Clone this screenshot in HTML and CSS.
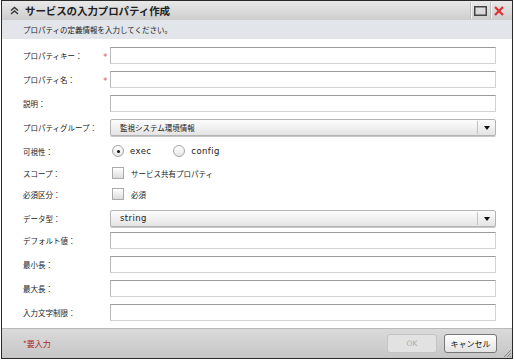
FILE: index.html
```html
<!DOCTYPE html>
<html lang="ja">
<head>
  <meta charset="UTF-8" />
  <meta name="viewport" content="width=device-width, initial-scale=1" />
  <title>サービスの入力プロパティ作成</title>
  <link rel="stylesheet" href="styles.css">
</head>
<body>
  <div class="dialog">
    <div class="titlebar">
      <svg class="collapse" width="9" height="9" viewBox="0 0 9 9">
        <path d="M1 4.5 L4.5 1.5 L8 4.5 M1 8 L4.5 5 L8 8" fill="none" stroke="#333" stroke-width="1.4" />
      </svg>
      <span class="title">サービスの入力プロパティ作成</span>
      <div class="tools">
        <span class="tool-sep"></span>
        <svg width="13" height="10" viewBox="0 0 13 10">
          <rect x="0.75" y="0.75" width="11.5" height="8.5" fill="none" stroke="#444" stroke-width="1.5" />
        </svg>
        <span class="tool-sep"></span>
        <svg width="10" height="10" viewBox="0 0 10 10">
          <path d="M1 1 L9 9 M9 1 L1 9" stroke="#e03030" stroke-width="2.2" />
        </svg>
      </div>
    </div>

    <div class="subtitle">プロパティの定義情報を入力してください。</div>

    <div class="form">
      <label class="label">プロパティキー：</label>
      <span class="req">*</span>
      <input class="text" type="text" />

      <label class="label">プロパティ名：</label>
      <span class="req">*</span>
      <input class="text" type="text" />

      <label class="label">説明：</label>
      <span></span>
      <input class="text" type="text" />

      <label class="label">プロパティグループ：</label>
      <span></span>
      <div class="select">
        <span class="select-value">監視システム環境情報</span>
        <span class="select-arrow"></span>
      </div>

      <label class="label">可視性：</label>
      <span></span>
      <div class="choices">
        <span class="radio checked"></span><span class="latin">exec</span>
        <span class="radio gap"></span><span class="latin">config</span>
      </div>

      <label class="label">スコープ：</label>
      <span></span>
      <div class="choices">
        <span class="check"></span><span>サービス共有プロパティ</span>
      </div>

      <label class="label">必須区分：</label>
      <span></span>
      <div class="choices">
        <span class="check"></span><span>必須</span>
      </div>

      <label class="label shift">データ型：</label>
      <span class="shift"></span>
      <div class="select shift">
        <span class="select-value latin">string</span>
        <span class="select-arrow"></span>
      </div>

      <label class="label">デフォルト値：</label>
      <span></span>
      <input class="text" type="text" />

      <label class="label">最小長：</label>
      <span></span>
      <input class="text" type="text" />

      <label class="label">最大長：</label>
      <span></span>
      <input class="text" type="text" />

      <label class="label">入力文字制限：</label>
      <span></span>
      <input class="text" type="text" />
    </div>

    <div class="footer">
      <span class="req-note">*要入力</span>
      <div class="buttons">
        <button class="btn btn-ok" disabled>OK</button>
        <button class="btn">キャンセル</button>
      </div>
      <svg class="grip" width="7" height="7" viewBox="0 0 7 7">
        <path d="M0 7 L7 0 M3 7 L7 3 M6 7 L7 6" stroke="#888" stroke-width="1" />
      </svg>
    </div>
  </div>
</body>
</html>
```

FILE: styles.css
```css
* {
  box-sizing: border-box;
}

body {
  margin: 0;
  background: #fff;
  font-family: "Noto Sans CJK JP", "DejaVu Sans", sans-serif;
  color: #222;
}

.dialog {
  margin-left: 1px;
  width: 512px;
  height: 359px;
  border: 1px solid #2a2a2a;
  display: flex;
  flex-direction: column;
  background: #fff;
}

/* title */
.titlebar {
  height: 19px;
  display: flex;
  align-items: center;
  padding-left: 8px;
  background: linear-gradient(#e9e9e9, #cdcdcd);
  position: relative;
}

.collapse {
  margin-right: 6px;
}

.title {
  font-size: 10.5px;
  font-weight: 700;
  color: #222;
  letter-spacing: -0.1px;
}

.tools {
  margin-left: auto;
  display: flex;
  align-items: center;
  gap: 3px;
  padding-right: 8px;
}

.tool-sep {
  width: 1px;
  height: 17px;
  background: #bdbdbd;
  box-shadow: 1px 0 0 #f2f2f2;
}

.subtitle {
  height: 19px;
  background: #e2e6ea;
  font-size: 7.5px;
  line-height: 19px;
  padding-left: 21px;
  color: #222;
}

/* form */
.form {
  flex: 1;
  display: grid;
  grid-template-columns: 80px 7px 1fr;
  grid-template-rows: 17px 17px 17px 17px 16px 14px 14px 17px 17px 17px 17px 17px;
  row-gap: 7px;
  padding: 8px 16px 4px 21px;
  align-items: center;
}

.label {
  font-size: 7.5px;
  color: #222;
  white-space: nowrap;
}

.shift {
  margin-top: 3px;
}

.req {
  color: #e05a5a;
  font-family: "DejaVu Sans", sans-serif;
  font-size: 9px;
  line-height: 1;
  padding-top: 3px;
}

.text {
  width: 100%;
  height: 17px;
  margin: 0;
  border: 1px solid #d2d2d2;
  border-top-color: #9c9c9c;
  border-left-color: #b8b8b8;
  background: #fff;
  outline: none;
}

.select {
  height: 17px;
  display: flex;
  align-items: center;
  border: 1px solid #b4b4b4;
  border-radius: 2px;
  background: linear-gradient(#fdfdfd, #e4e4e4);
  box-shadow: 0 1px 0 #c8c8c8;
}

.select-value {
  flex: 1;
  padding-left: 9px;
  font-size: 7.5px;
}

.select-arrow {
  width: 18px;
  height: 13px;
  border-left: 1px solid #c4c4c4;
  position: relative;
}

.select-arrow::after {
  content: "";
  position: absolute;
  left: 6px;
  top: 5px;
  border-left: 3px solid transparent;
  border-right: 3px solid transparent;
  border-top: 4px solid #111;
}

.latin {
  font-family: "DejaVu Sans", sans-serif;
  font-size: 8.5px;
  letter-spacing: 0.4px;
}

.choices {
  display: flex;
  align-items: center;
  font-size: 7.5px;
  padding-left: 2px;
}

.radio {
  width: 12px;
  height: 12px;
  border: 1px solid #a5a5a5;
  border-radius: 50%;
  background: linear-gradient(#fff, #e6e6e6);
  margin-right: 6px;
  position: relative;
}

.radio.checked::after {
  content: "";
  position: absolute;
  left: 3.5px;
  top: 3.5px;
  width: 3px;
  height: 3px;
  border-radius: 50%;
  background: #111;
}

.radio.gap {
  margin-left: 22px;
}

.check {
  width: 12px;
  height: 12px;
  border: 1px solid #aaa;
  background: linear-gradient(#fff, #dcdcdc);
  margin-right: 7px;
}

/* footer */
.footer {
  height: 30px;
  display: flex;
  align-items: center;
  padding-left: 21px;
  border-top: 1px solid #b9b9b9;
  background: linear-gradient(#dadada, #c6c6c6);
  position: relative;
}

.req-note {
  color: #b32020;
  font-size: 8px;
}

.buttons {
  margin-left: auto;
  display: flex;
  gap: 7px;
  margin-right: 15px;
}

.btn {
  height: 19px;
  padding: 0;
  width: 53px;
  border: 1px solid #777;
  border-radius: 3px;
  background: linear-gradient(#fff, #e3e3e3);
  font-family: "Noto Sans CJK JP", sans-serif;
  font-size: 8px;
  color: #111;
}

.btn-ok {
  width: 50px;
  border-color: #c4c4c4;
  background: #e2e2e2;
  color: #aaa;
  font-family: "DejaVu Sans", sans-serif;
  font-size: 7.5px;
}

.grip {
  position: absolute;
  right: 1px;
  bottom: 1px;
}
```
